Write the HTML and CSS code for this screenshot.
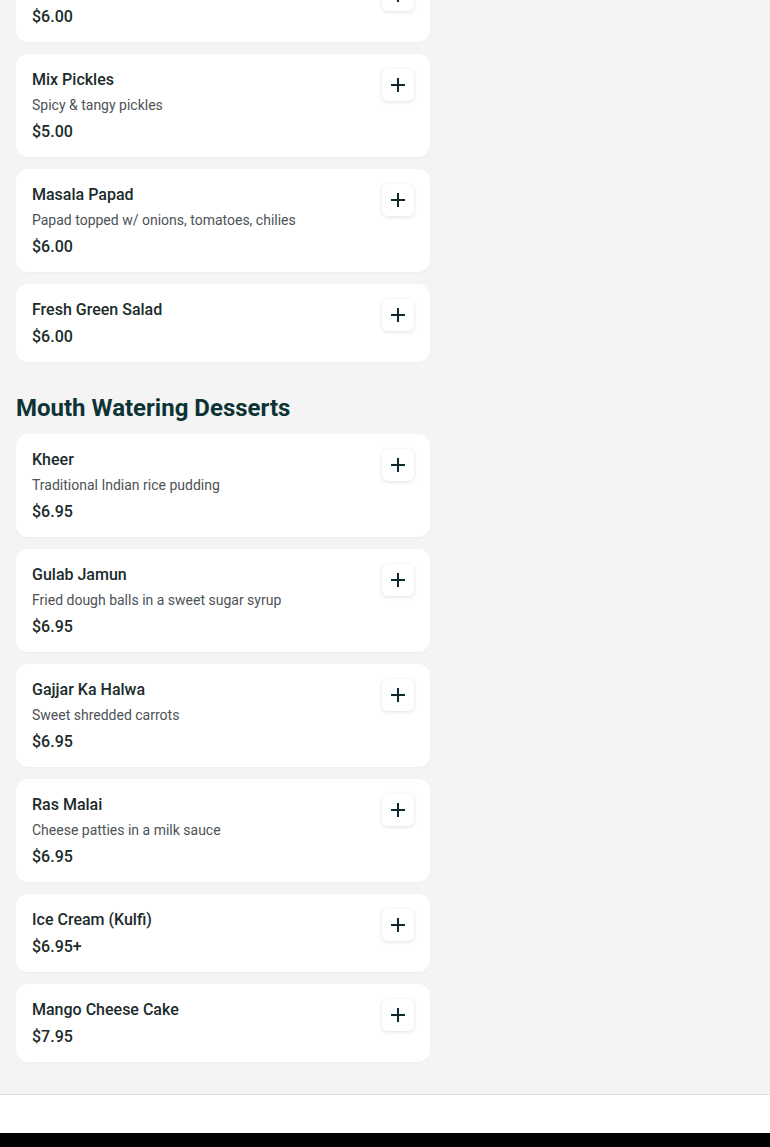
FILE: index.html
```html
<!DOCTYPE html>
<html lang="en">
<head>
<meta charset="utf-8">
<title>Menu</title>
<link rel="stylesheet" href="styles.css">
</head>
<body>
<main class="page">
  <div class="menu">
    <section class="section section-scrolled">
      <div class="items">
        <article class="card">
          <div class="info">
            <h3 class="name">Plain Papad</h3>
            <p class="price">$6.00</p>
          </div>
          <button class="add" aria-label="Add"><svg viewBox="0 0 16 16" width="16" height="16"><path d="M8 1v14M1 8h14" stroke="currentColor" stroke-width="2" fill="none"/></svg></button>
        </article>
        <article class="card">
          <div class="info">
            <h3 class="name">Mix Pickles</h3>
            <p class="desc">Spicy &amp; tangy pickles</p>
            <p class="price">$5.00</p>
          </div>
          <button class="add" aria-label="Add"><svg viewBox="0 0 16 16" width="16" height="16"><path d="M8 1v14M1 8h14" stroke="currentColor" stroke-width="2" fill="none"/></svg></button>
        </article>
        <article class="card">
          <div class="info">
            <h3 class="name">Masala Papad</h3>
            <p class="desc">Papad topped w/ onions, tomatoes, chilies</p>
            <p class="price">$6.00</p>
          </div>
          <button class="add" aria-label="Add"><svg viewBox="0 0 16 16" width="16" height="16"><path d="M8 1v14M1 8h14" stroke="currentColor" stroke-width="2" fill="none"/></svg></button>
        </article>
        <article class="card">
          <div class="info">
            <h3 class="name">Fresh Green Salad</h3>
            <p class="price">$6.00</p>
          </div>
          <button class="add" aria-label="Add"><svg viewBox="0 0 16 16" width="16" height="16"><path d="M8 1v14M1 8h14" stroke="currentColor" stroke-width="2" fill="none"/></svg></button>
        </article>
      </div>
    </section>

    <section class="section">
      <h2 class="section-title">Mouth Watering Desserts</h2>
      <div class="items">
        <article class="card">
          <div class="info">
            <h3 class="name">Kheer</h3>
            <p class="desc">Traditional Indian rice pudding</p>
            <p class="price">$6.95</p>
          </div>
          <button class="add" aria-label="Add"><svg viewBox="0 0 16 16" width="16" height="16"><path d="M8 1v14M1 8h14" stroke="currentColor" stroke-width="2" fill="none"/></svg></button>
        </article>
        <article class="card">
          <div class="info">
            <h3 class="name">Gulab Jamun</h3>
            <p class="desc">Fried dough balls in a sweet sugar syrup</p>
            <p class="price">$6.95</p>
          </div>
          <button class="add" aria-label="Add"><svg viewBox="0 0 16 16" width="16" height="16"><path d="M8 1v14M1 8h14" stroke="currentColor" stroke-width="2" fill="none"/></svg></button>
        </article>
        <article class="card">
          <div class="info">
            <h3 class="name">Gajjar Ka Halwa</h3>
            <p class="desc">Sweet shredded carrots</p>
            <p class="price">$6.95</p>
          </div>
          <button class="add" aria-label="Add"><svg viewBox="0 0 16 16" width="16" height="16"><path d="M8 1v14M1 8h14" stroke="currentColor" stroke-width="2" fill="none"/></svg></button>
        </article>
        <article class="card">
          <div class="info">
            <h3 class="name">Ras Malai</h3>
            <p class="desc">Cheese patties in a milk sauce</p>
            <p class="price">$6.95</p>
          </div>
          <button class="add" aria-label="Add"><svg viewBox="0 0 16 16" width="16" height="16"><path d="M8 1v14M1 8h14" stroke="currentColor" stroke-width="2" fill="none"/></svg></button>
        </article>
        <article class="card">
          <div class="info">
            <h3 class="name">Ice Cream (Kulfi)</h3>
            <p class="price">$6.95+</p>
          </div>
          <button class="add" aria-label="Add"><svg viewBox="0 0 16 16" width="16" height="16"><path d="M8 1v14M1 8h14" stroke="currentColor" stroke-width="2" fill="none"/></svg></button>
        </article>
        <article class="card">
          <div class="info">
            <h3 class="name">Mango Cheese Cake</h3>
            <p class="price">$7.95</p>
          </div>
          <button class="add" aria-label="Add"><svg viewBox="0 0 16 16" width="16" height="16"><path d="M8 1v14M1 8h14" stroke="currentColor" stroke-width="2" fill="none"/></svg></button>
        </article>
      </div>
    </section>
  </div>
</main>
<footer class="footer">
  <div class="footer-gap"></div>
  <div class="footer-bar"></div>
</footer>
</body>
</html>
```
FILE: styles.css
```css
* { box-sizing: border-box; }
html, body {
  margin: 0;
  padding: 0;
  background: #f4f4f4;
  font-family: Roboto, "Liberation Sans", Arial, sans-serif;
  color: #1b2b2b;
}
.page {
  padding: 0 16px 32px;
  border-bottom: 1px solid #dcdcdc;
}
.menu {
  width: 414px;
  display: flex;
  flex-direction: column;
  gap: 32px;
}
.section-scrolled {
  margin-top: -36px;
}
.section-title {
  margin: 0 0 12px;
  font-size: 24px;
  line-height: 28px;
  font-weight: 700;
  color: #0e3337;
}
.items {
  display: flex;
  flex-direction: column;
  gap: 12px;
}
.card {
  background: #fff;
  border-radius: 12px;
  padding: 16px 16px 15px;
  display: flex;
  justify-content: space-between;
  align-items: flex-start;
  box-shadow: 0 1px 2px rgba(0,0,0,0.03);
}
.info {
  display: flex;
  flex-direction: column;
}
.name {
  margin: 0;
  font-size: 16px;
  line-height: 20px;
  font-weight: 500;
  color: #1b2b2b;
}
.desc {
  margin: 5px 0 0;
  font-size: 14px;
  line-height: 20px;
  color: #4d5257;
}
.price {
  margin: 7px 0 0;
  font-size: 16px;
  line-height: 20px;
  font-weight: 500;
  color: #1b2b2b;
}
.add {
  width: 32px;
  height: 32px;
  margin-top: -1px;
  border: none;
  border-radius: 6px;
  background: #fff;
  box-shadow: 0 1px 4px rgba(0,0,0,0.12);
  display: flex;
  align-items: center;
  justify-content: center;
  padding: 0;
  color: #0f2a2a;
  flex-shrink: 0;
}
.footer {
  background: #fff;
}
.footer-gap {
  height: 38px;
  background: #fff;
}
.footer-bar {
  height: 40px;
  background: #000;
}
```
